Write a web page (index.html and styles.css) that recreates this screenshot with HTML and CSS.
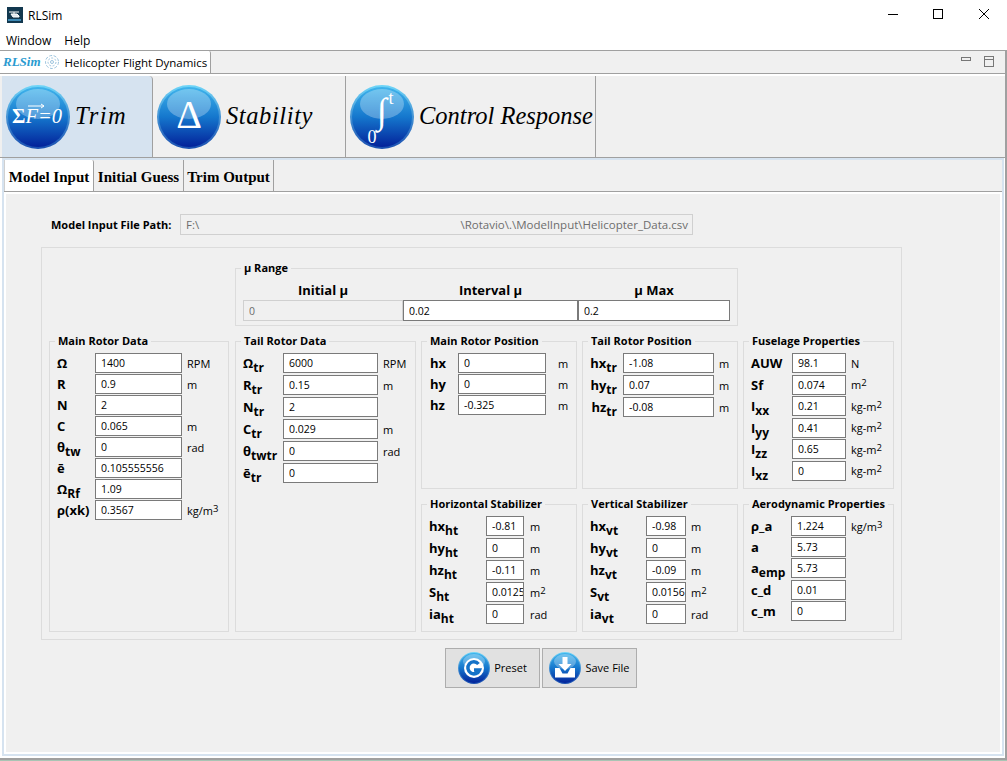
FILE: index.html
```html
<!DOCTYPE html>
<html lang="en">
<head>
  <meta charset="UTF-8" />
  <title>RLSim</title>
  <link rel="stylesheet" href="styles.css">
</head>
<body>
  <svg class="defs" width="0" height="0">
    <defs>
      <linearGradient id="orbFill" x1="0" y1="0" x2="0" y2="1">
        <stop offset="0" stop-color="#3fb4ec" />
        <stop offset="0.5" stop-color="#1577cd" />
        <stop offset="1" stop-color="#03229a" />
      </linearGradient>
      <linearGradient id="orbRing" x1="0" y1="0" x2="0" y2="1">
        <stop offset="0" stop-color="#6fd6f8" />
        <stop offset="1" stop-color="#1a4fb0" />
      </linearGradient>
      <symbol id="orb" viewBox="0 0 64 64">
        <circle cx="32" cy="32" r="32" fill="url(#orbRing)" />
        <circle cx="32" cy="32" r="30" fill="url(#orbFill)" />
        <ellipse cx="32" cy="19" rx="22" ry="15" fill="#fff" opacity="0.28" />
      </symbol>
    </defs>
  </svg>

  <header class="titlebar">
    <svg class="app-icon" width="16" height="16" viewBox="0 0 16 16">
      <rect width="16" height="16" fill="#12384f" />
      <path d="M2 5h10M7 5v2M4 7h6l2 2v1H6z" stroke="#fff" fill="#dfe8ee" stroke-width="1" />
      <path d="M1 13h13" stroke="#3d89b5" stroke-width="2" />
    </svg>
    <span class="app-name">RLSim</span>
    <div class="window-controls">
      <svg width="120" height="30" viewBox="0 0 120 30">
        <path d="M8 14.5h10" stroke="#000" />
        <rect x="53.5" y="9.5" width="9" height="9" fill="none" stroke="#000" />
        <path d="M99 9l10 10M109 9l-10 10" stroke="#000" />
      </svg>
    </div>
  </header>

  <div class="menubar">
    <span>Window</span>
    <span>Help</span>
  </div>

  <main class="workspace">
    <div class="doc-tabs">
      <div class="doc-tab">
        <span class="doc-logo">RLSim</span>
        <svg width="16" height="16" viewBox="0 0 16 16" fill="none" stroke="#9cc4de">
          <circle cx="8" cy="8" r="6.5" stroke-dasharray="3 1.5" />
          <circle cx="8" cy="8" r="4" stroke-dasharray="2 1.5" />
          <circle cx="8" cy="8" r="1.5" />
        </svg>
        <span class="doc-title">Helicopter Flight Dynamics</span>
      </div>
      <svg class="doc-controls" width="34" height="11" viewBox="0 0 34 11" fill="none" stroke="#777">
        <rect x="0.5" y="1.5" width="9" height="3" />
        <rect x="23.5" y="0.5" width="9" height="10" />
        <path d="M23.5 3.5h9" />
      </svg>
    </div>

    <nav class="mode-tabs">
      <div class="mode-tab mode-tab-active">
        <svg class="orb" width="64" height="64" viewBox="0 0 64 64">
          <use href="#orb" width="64" height="64" />
          <text class="orb-sum" x="6" y="38"><tspan class="orb-sigma">Σ</tspan>F=0</text>
          <path d="M22 21h16m-3-2l3 2-3 2" stroke="#fff" fill="none" />
        </svg>
        <span>Trim</span>
      </div>
      <div class="mode-tab">
        <svg class="orb" width="64" height="64" viewBox="0 0 64 64">
          <use href="#orb" width="64" height="64" />
          <text class="orb-delta" x="32" y="43">Δ</text>
        </svg>
        <span>Stability</span>
      </div>
      <div class="mode-tab mode-tab-long">
        <svg class="orb" width="64" height="64" viewBox="0 0 64 64">
          <use href="#orb" width="64" height="64" />
          <text class="orb-int" x="32" y="38">∫</text>
          <text class="orb-small" x="22" y="58">0</text>
          <text class="orb-small" x="41" y="19">t</text>
        </svg>
        <span>Control Response</span>
      </div>
    </nav>

    <section class="pane">
      <div class="sub-tabs">
        <div class="sub-tab sub-tab-active">Model Input</div>
        <div class="sub-tab">Initial Guess</div>
        <div class="sub-tab">Trim Output</div>
      </div>

      <div class="sub-frame">
        <div class="content">
          <div class="path-row">
            <span class="path-label">Model Input File Path:</span>
            <div class="path-field">
              <span>F:\</span>
              <span>\Rotavio\.\ModelInput\Helicopter_Data.csv</span>
            </div>
          </div>

          <div class="data-panel">
            <fieldset class="group group-mu">
              <legend>µ Range</legend>
              <div class="mu-grid">
                <strong>Initial µ</strong>
                <strong>Interval µ</strong>
                <strong>µ Max</strong>
                <input class="input-off" value="0" disabled>
                <input value="0.02">
                <input value="0.2">
              </div>
            </fieldset>

            <fieldset class="group group-tall">
              <legend>Main Rotor Data</legend>
              <div class="form form-main">
                <label>Ω</label><input value="1400"><span class="unit">RPM</span>
                <label>R</label><input value="0.9"><span class="unit">m</span>
                <label>N</label><input value="2">
                <label>C</label><input value="0.065"><span class="unit">m</span>
                <label>θ<sub>tw</sub></label><input value="0"><span class="unit">rad</span>
                <label>ē</label><input value="0.105555556">
                <label>Ω<sub>Rf</sub></label><input value="1.09">
                <label>ρ(xk)</label><input value="0.3567"><span class="unit">kg/m<sup>3</sup></span>
              </div>
            </fieldset>

            <fieldset class="group group-tall">
              <legend>Tail Rotor Data</legend>
              <div class="form form-tail">
                <label>Ω<sub>tr</sub></label><input value="6000"><span class="unit">RPM</span>
                <label>R<sub>tr</sub></label><input value="0.15"><span class="unit">m</span>
                <label>N<sub>tr</sub></label><input value="2">
                <label>C<sub>tr</sub></label><input value="0.029"><span class="unit">m</span>
                <label>θ<sub>twtr</sub></label><input value="0"><span class="unit">rad</span>
                <label>ē<sub>tr</sub></label><input value="0">
              </div>
            </fieldset>

            <fieldset class="group">
              <legend>Main Rotor Position</legend>
              <div class="form form-mainpos">
                <label>hx</label><input value="0"><span class="unit">m</span>
                <label>hy</label><input value="0"><span class="unit">m</span>
                <label>hz</label><input value="-0.325"><span class="unit">m</span>
              </div>
            </fieldset>

            <fieldset class="group">
              <legend>Tail Rotor Position</legend>
              <div class="form form-tailpos">
                <label>hx<sub>tr</sub></label><input value="-1.08"><span class="unit">m</span>
                <label>hy<sub>tr</sub></label><input value="0.07"><span class="unit">m</span>
                <label>hz<sub>tr</sub></label><input value="-0.08"><span class="unit">m</span>
              </div>
            </fieldset>

            <fieldset class="group">
              <legend>Fuselage Properties</legend>
              <div class="form form-fuselage">
                <label>AUW</label><input value="98.1"><span class="unit">N</span>
                <label>Sf</label><input value="0.074"><span class="unit">m<sup>2</sup></span>
                <label>I<sub>xx</sub></label><input value="0.21"><span class="unit">kg-m<sup>2</sup></span>
                <label>I<sub>yy</sub></label><input value="0.41"><span class="unit">kg-m<sup>2</sup></span>
                <label>I<sub>zz</sub></label><input value="0.65"><span class="unit">kg-m<sup>2</sup></span>
                <label>I<sub>xz</sub></label><input value="0"><span class="unit">kg-m<sup>2</sup></span>
              </div>
            </fieldset>

            <fieldset class="group">
              <legend>Horizontal Stabilizer</legend>
              <div class="form form-hstab">
                <label>hx<sub>ht</sub></label><input value="-0.81"><span class="unit">m</span>
                <label>hy<sub>ht</sub></label><input value="0"><span class="unit">m</span>
                <label>hz<sub>ht</sub></label><input value="-0.11"><span class="unit">m</span>
                <label>S<sub>ht</sub></label><input value="0.0125"><span class="unit">m<sup>2</sup></span>
                <label>ia<sub>ht</sub></label><input value="0"><span class="unit">rad</span>
              </div>
            </fieldset>

            <fieldset class="group">
              <legend>Vertical Stabilizer</legend>
              <div class="form form-vstab">
                <label>hx<sub>vt</sub></label><input value="-0.98"><span class="unit">m</span>
                <label>hy<sub>vt</sub></label><input value="0"><span class="unit">m</span>
                <label>hz<sub>vt</sub></label><input value="-0.09"><span class="unit">m</span>
                <label>S<sub>vt</sub></label><input value="0.0156"><span class="unit">m<sup>2</sup></span>
                <label>ia<sub>vt</sub></label><input value="0"><span class="unit">rad</span>
              </div>
            </fieldset>

            <fieldset class="group">
              <legend>Aerodynamic Properties</legend>
              <div class="form form-aero">
                <label>ρ_a</label><input value="1.224"><span class="unit">kg/m<sup>3</sup></span>
                <label>a</label><input value="5.73">
                <label>a<sub>emp</sub></label><input value="5.73">
                <label>c_d</label><input value="0.01">
                <label>c_m</label><input value="0">
              </div>
            </fieldset>
          </div>

          <div class="actions">
            <button class="action">
              <svg width="32" height="32" viewBox="0 0 64 64">
                <use href="#orb" width="64" height="64" />
                <circle cx="32" cy="32" r="20" fill="#fff" />
                <path d="M41 24a12 12 0 1 0 2 12H32" fill="none" stroke="#1472c8" stroke-width="7" />
              </svg>
              <span>Preset</span>
            </button>
            <button class="action">
              <svg width="32" height="32" viewBox="0 0 64 64">
                <use href="#orb" width="64" height="64" />
                <path d="M27 10h10v14h8L32 38 19 24h8z" fill="#fff" />
                <path d="M12 32h9l6 11h10l6-11h9v19H12z" fill="#fff" />
              </svg>
              <span>Save File</span>
            </button>
          </div>
        </div>
      </div>
    </section>
  </main>
</body>
</html>
```

FILE: styles.css
```css
* {
  box-sizing: border-box;
}

html, body {
  margin: 0;
  height: 761px;
  overflow: hidden;
  font-family: "Open Sans", Arial, sans-serif;
  color: #000;
  background-color: #fff;
}

body {
  display: flex;
  flex-direction: column;
  border-bottom: 1px solid #a9c4b4;
}

.defs {
  display: block;
  height: 0;
}

/* window chrome */
.titlebar {
  display: flex;
  align-items: center;
  height: 30px;
  flex: none;
  padding-left: 7px;
  font-size: 12px;
}

.app-icon {
  margin-right: 5px;
}

.window-controls {
  margin-left: auto;
  height: 30px;
  margin-right: 7px;
}

.menubar {
  display: flex;
  gap: 13px;
  align-items: center;
  height: 20px;
  flex: none;
  padding-left: 6px;
  font-size: 12px;
}

.workspace {
  flex: 1;
  min-height: 0;
  display: flex;
  flex-direction: column;
  border-top: 1px solid #a0a0a0;
  border-right: 2px solid #a0a0a0;
  border-bottom: 2px solid #a0a0a0;
}

/* document tab */
.doc-tabs {
  display: flex;
  align-items: stretch;
  justify-content: space-between;
  height: 23px;
  flex: none;
  background-color: #f0f0f0;
  border-bottom: 1px solid #a0a0a0;
  margin-bottom: 2px;
}

.doc-tab {
  display: flex;
  align-items: center;
  gap: 3px;
  width: 211px;
  padding-left: 3px;
  font-size: 11.5px;
  white-space: nowrap;
  background-color: #fff;
  border-right: 1px solid #a0a0a0;
  border-top-right-radius: 2px;
}

.doc-logo {
  font-family: "Liberation Serif", serif;
  font-style: italic;
  font-weight: bold;
  font-size: 13px;
  color: #2a9bd0;
}

.doc-title {
  margin-left: 2px;
}

.doc-controls {
  margin: 5px 10px 0 0;
}

/* big mode tabs */
.mode-tabs {
  display: flex;
  height: 82px;
  flex: none;
  padding-left: 2px;
  background-color: #f0f0f0;
  border-bottom: 1px solid #a0a0a0;
}

.mode-tab {
  display: flex;
  align-items: center;
  gap: 5px;
  padding-left: 4px;
  width: 193px;
  font-family: "Liberation Serif", serif;
  font-style: italic;
  font-size: 24.5px;
  letter-spacing: 0.6px;
  white-space: nowrap;
  border-right: 1px solid #a0a0a0;
}

.mode-tab span {
  margin-bottom: 2px;
}

.mode-tab-long {
  width: 250px;
  letter-spacing: 0;
}

.mode-tab-active {
  width: 151px;
  letter-spacing: 1.5px;
  background-color: #d6e3f0;
  border-top-right-radius: 4px;
}

.orb {
  flex: none;
}

.orb text {
  fill: #fff;
  font-family: "Liberation Serif", serif;
  font-style: normal;
  letter-spacing: 0;
}

.orb .orb-sum {
  font-size: 20.5px;
  font-style: italic;
}

.orb .orb-sigma {
  font-style: normal;
  font-weight: bold;
}

.orb .orb-delta {
  font-size: 40px;
  text-anchor: middle;
}

.orb .orb-int {
  font-size: 36px;
  text-anchor: middle;
}

.orb .orb-small {
  font-size: 18px;
  text-anchor: middle;
}

/* pane with the small tabs */
.pane {
  flex: 1;
  min-height: 0;
  display: flex;
  flex-direction: column;
  margin: 0 1px 2px 2px;
  border: 2px solid #d6e3f0;
}

.sub-tabs {
  display: flex;
  height: 32px;
  flex: none;
  background-color: #f0f0f0;
  border-bottom: 1px solid #a0a0a0;
}

.sub-tab {
  display: flex;
  align-items: center;
  justify-content: center;
  width: 90px;
  padding-top: 3px;
  font-family: "Liberation Serif", serif;
  font-weight: bold;
  font-size: 15px;
  border-right: 1px solid #a0a0a0;
}

.sub-tab-active {
  background-color: #fff;
  border-left: 1px solid #d0d0d0;
  border-top-right-radius: 2px;
}

.sub-frame {
  flex: 1;
  min-height: 0;
  padding: 2px;
  background-color: #fff;
}

.content {
  height: 100%;
  padding: 20px 0 0 45px;
  background-color: #f0f0f0;
}

.path-row {
  display: flex;
  align-items: center;
  height: 21px;
}

.path-label {
  width: 129px;
  font-size: 11px;
  font-weight: bold;
}

.path-field {
  display: flex;
  justify-content: space-between;
  align-items: center;
  width: 513px;
  height: 21px;
  padding: 0 4px 0 5px;
  font-size: 11.5px;
  color: #6d6d6d;
  border: 1px solid #d0d0d0;
}

/* data panel */
.data-panel {
  display: grid;
  grid-template-columns: 181px 181px 156px 156px 151px;
  grid-template-rows: 65px 155px 135px;
  column-gap: 5px;
  row-gap: 8px;
  width: 861px;
  height: 393px;
  margin: 12px 0 0 -10px;
  padding: 13px 0 0 7px;
  border: 1px solid #dcdcdc;
}

.group {
  min-width: 0;
  margin: 0;
  padding: 5px 0 0 7px;
  border: 1px solid #dcdcdc;
}

.group legend {
  margin-left: -2px;
  padding: 0 3px;
  font-size: 11px;
  line-height: 14px;
  font-weight: bold;
}

.group-mu {
  grid-column: 2 / 6;
  width: 503px;
  padding-top: 8px;
}

.group-tall {
  grid-row: 2 / 4;
}

.group:nth-child(2) {
  width: 180px;
}

.mu-grid {
  display: grid;
  grid-template-columns: 160px 175px 152px;
  grid-template-rows: 17px 21px;
  text-align: center;
  font-size: 13px;
}

.mu-grid strong {
  line-height: 15px;
}

input {
  width: 100%;
  height: 100%;
  min-width: 0;
  margin: 0;
  padding: 0 0 0 5px;
  font-family: inherit;
  font-size: 10.5px;
  color: #000;
  background-color: #fff;
  border: 1px solid #7a7a7a;
  border-radius: 0;
  outline: none;
}

.mu-grid .input-off {
  color: #6d6d6d;
  background-color: #f0f0f0;
  border-color: #d0d0d0;
}

/* label / input / unit rows */
.form {
  display: grid;
  grid-auto-rows: 20px;
  row-gap: 1px;
  align-items: center;
}

.form label {
  grid-column: 1;
  font-size: 13px;
  line-height: 20px;
  font-weight: bold;
  white-space: nowrap;
}

.form input {
  grid-column: 2;
}

.unit {
  grid-column: 3;
  padding-left: 5px;
  font-size: 11px;
  white-space: nowrap;
}

sub {
  font-size: 12px;
  line-height: 0;
  vertical-align: -4px;
}

sup {
  font-size: 9.5px;
  line-height: 0;
  vertical-align: 3px;
}

.form-main {
  grid-template-columns: 38px 87px auto;
}

.form-tail {
  grid-template-columns: 40px 95px auto;
  row-gap: 2px;
}

.form-mainpos {
  grid-template-columns: 29px 88px auto;
}

.form-mainpos label {
  padding-left: 1px;
}

.form-mainpos .unit {
  padding-left: 12px;
}

.form-tailpos {
  grid-template-columns: 33px 91px auto;
  row-gap: 2px;
}

.form-tailpos label {
  padding-right: 6px;
  text-align: right;
}

.form-fuselage {
  grid-template-columns: 41px 54px auto;
  row-gap: 1.6px;
}

.form-hstab {
  grid-template-columns: 57px 38px auto;
  row-gap: 2px;
}

.form-hstab .unit {
  padding-left: 6px;
}

.form-vstab {
  grid-template-columns: 56px 40px auto;
  row-gap: 2px;
}

.form-aero {
  grid-template-columns: 40px 55px auto;
  row-gap: 1.2px;
}

/* buttons */
.actions {
  display: flex;
  gap: 2px;
  margin: 8px 0 0 394px;
}

.action {
  display: flex;
  align-items: center;
  justify-content: center;
  gap: 4px;
  width: 95px;
  height: 40px;
  padding: 0 0 2px;
  font-family: inherit;
  font-size: 11px;
  color: #000;
  background-color: #e1e1e1;
  border: 1px solid #adadad;
}

.action svg {
  margin-top: 2px;
}
```
